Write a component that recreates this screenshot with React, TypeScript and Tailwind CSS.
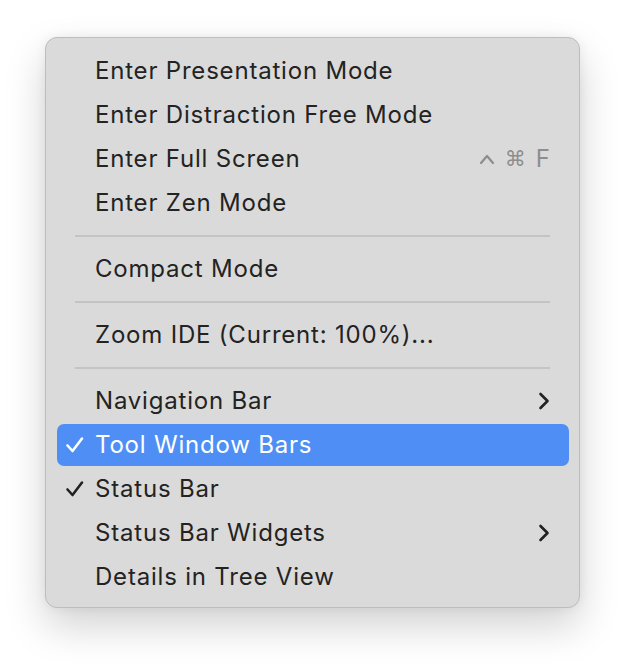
import React from "react";

type Item = { label: string; check?: boolean; sub?: boolean; shortcut?: boolean; active?: boolean };

const CheckIcon = ({ color }: { color: string }) => (
  <svg width="20" height="18" viewBox="0 0 20 18" className="absolute left-[19px]">
    <path d="M2.5 9.5 L7.5 15 L17 2.5" fill="none" stroke={color} strokeWidth="2.6" strokeLinecap="round" strokeLinejoin="round" />
  </svg>
);

const Row = ({ item }: { item: Item }) => {
  if (item.active) {
    return (
      <div className="relative h-[44px] flex items-center">
        <div className="absolute left-[11px] right-[10px] top-[1px] bottom-[1px] rounded-[7px] bg-[#4f8ff5]" />
        <div className="relative flex items-center w-full h-full">
          {item.check && <CheckIcon color="#ffffff" />}
          <span className="pl-[49px] text-white">{item.label}</span>
        </div>
      </div>
    );
  }
  return (
    <div className="relative h-[44px] flex items-center">
      {item.check && <CheckIcon color="#222222" />}
      <span className="pl-[49px] text-[#232323]">{item.label}</span>
      {item.sub && (
        <svg width="14" height="20" viewBox="0 0 14 20" className="absolute right-[28px]">
          <path d="M3.5 3 L10.5 10 L3.5 17" fill="none" stroke="#222222" strokeWidth="2.6" strokeLinecap="round" strokeLinejoin="round" />
        </svg>
      )}
      {item.shortcut && (
        <span className="absolute right-[29px] flex items-center gap-[10px] text-[#8d8d8d] tracking-normal">
          <svg width="16" height="12" viewBox="0 0 16 12">
            <path d="M2 10 L8 3 L14 10" fill="none" stroke="#8d8d8d" strokeWidth="2.2" strokeLinecap="round" strokeLinejoin="round" />
          </svg>
          <span className="font-['DejaVu_Sans',sans-serif] text-[21px] leading-none">⌘</span>
          <span className="leading-none">F</span>
        </span>
      )}
    </div>
  );
};

const Sep = () => (
  <div className="h-[22px] flex items-center px-[29px]">
    <div className="h-[2px] w-full bg-[#c4c4c4]" />
  </div>
);

export default function App() {
  const g1: Item[] = [
    { label: "Enter Presentation Mode" },
    { label: "Enter Distraction Free Mode" },
    { label: "Enter Full Screen", shortcut: true },
    { label: "Enter Zen Mode" },
  ];
  const g4: Item[] = [
    { label: "Navigation Bar", sub: true },
    { label: "Tool Window Bars", check: true, active: true },
    { label: "Status Bar", check: true },
    { label: "Status Bar Widgets", sub: true },
    { label: "Details in Tree View" },
  ];
  return (
    <div className="w-[626px] h-[662px] bg-white pt-[37px] pl-[45px] font-['Inter',sans-serif] text-[24px] tracking-[0.8px]">
      <div className="w-[535px] rounded-[12px] bg-[#dadada] border border-[#bdbdbd] shadow-[0_18px_40px_rgba(0,0,0,0.18),0_0_12px_rgba(0,0,0,0.06)] pt-[11px] pb-[8px]">
        {g1.map((i) => (
          <Row key={i.label} item={i} />
        ))}
        <Sep />
        <Row item={{ label: "Compact Mode" }} />
        <Sep />
        <Row item={{ label: "Zoom IDE (Current: 100%)..." }} />
        <Sep />
        {g4.map((i) => (
          <Row key={i.label} item={i} />
        ))}
      </div>
    </div>
  );
}
